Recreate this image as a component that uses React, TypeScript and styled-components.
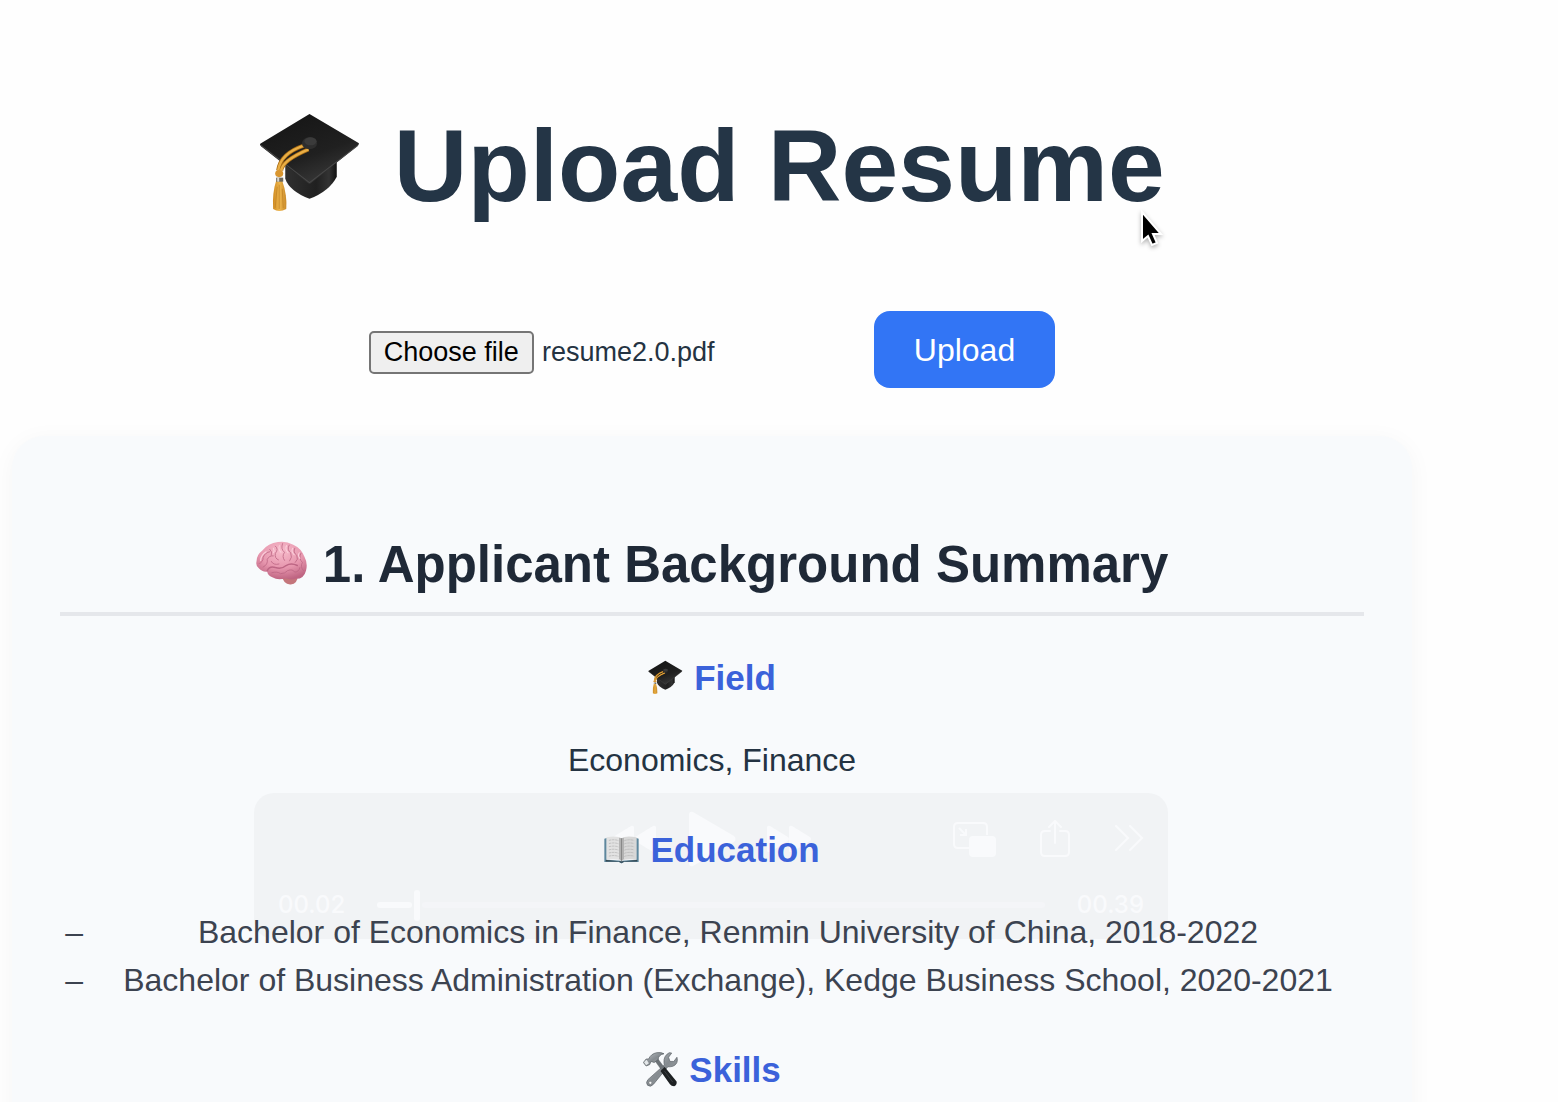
import React, { useId, useState } from "react";
import styled, { createGlobalStyle } from "styled-components";

const GlobalStyle = createGlobalStyle`
  *, *::before, *::after { box-sizing: border-box; }
  body {
    margin: 0;
    background: #fefefe;
    color: #243342;
    font-family: "Liberation Sans", Helvetica, Arial, sans-serif;
    font-size: 32px;
    line-height: 48px;
  }
`;

const Page = styled.main`
  position: relative;
  height: 100vh;
  overflow-y: auto;
  scrollbar-width: none;
  padding: 110px 146px 48px 12px;
  text-align: center;
`;

const Title = styled.h1`
  margin: 0 0 89px;
  font-size: 102px;
  line-height: 112px;
  color: #243546;
`;

const Pointer = styled.svg`
  position: absolute;
  left: 1138px;
  top: 208px;
  width: 28px;
  height: 42px;
  pointer-events: none;
  filter: drop-shadow(0 2px 2px rgba(0, 0, 0, 0.3));
`;

const UploadForm = styled.form`
  display: flex;
  justify-content: center;
  align-items: center;
  gap: 32px;
  margin-bottom: 48px;
`;

const FileField = styled.div`
  display: flex;
  align-items: center;
  gap: 8px;
  width: 473px;
  padding-top: 6px;
  font-size: 27px;
  line-height: 39px;
`;

const HiddenFileInput = styled.input`
  position: absolute;
  width: 1px;
  height: 1px;
  opacity: 0;
`;

const ChooseButton = styled.label`
  padding: 0 13px;
  border: 2px solid #757575;
  border-radius: 5px;
  background: #efefef;
  color: #000;
  white-space: nowrap;
`;

const UploadButton = styled.button`
  padding: 15px 40px 14px;
  border: 0;
  border-radius: 16px;
  background: #3275f5;
  color: #fff;
  font: inherit;
`;

const Card = styled.section`
  position: relative;
  padding: 90px 48px 48px;
  border-radius: 32px;
  background: #f8fafc;
  box-shadow: 0 4px 24px rgba(0, 0, 0, 0.04);
`;

const CardContent = styled.div`
  position: relative;
  z-index: 1;
`;

const SectionTitle = styled.h2`
  margin: 0 0 35px;
  padding-bottom: 9px;
  border-bottom: 4px solid #e5e7eb;
  font-size: 51px;
  line-height: 77px;
  color: #1f2937;
`;

const Topic = styled.h3`
  margin: 35px 0 32px;
  font-size: 35px;
  line-height: 53px;
  color: #3b62da;
`;

const Paragraph = styled.p`
  margin: 0 0 39px;
`;

const List = styled.ul`
  margin: 0 0 39px;
  padding-left: 32px;
  list-style-type: "– ";
  color: #3c4350;
`;

const EmojiSvg = styled.svg`
  width: 1em;
  height: 1em;
  margin-right: 0.04em;
  vertical-align: -0.13em;
`;

const Player = styled.div`
  position: absolute;
  top: 357px;
  left: 242px;
  right: 244px;
  height: 146px;
  padding: 18px 24px;
  border-radius: 20px;
  background: #f1f3f5;
  color: #f9fafc;
`;

const PlayerRow = styled.div`
  display: grid;
  grid-template-columns: 1fr auto 1fr;
  align-items: center;
  height: 56px;
`;

const Transport = styled.div`
  grid-column: 2;
  display: flex;
  align-items: center;
  gap: 30px;
`;

const Extras = styled.div`
  display: flex;
  justify-content: flex-end;
  align-items: center;
  gap: 44px;
`;

const Timeline = styled.div`
  display: flex;
  align-items: center;
  gap: 32px;
  margin-top: 20px;
  font-family: Inter, sans-serif;
  font-size: 24px;
  font-weight: 500;
  line-height: 36px;
`;

const Track = styled.div`
  flex: 1;
  display: flex;
  align-items: center;
  gap: 2px;
`;

const Played = styled.span`
  width: 35px;
  height: 6px;
  border-radius: 3px;
  background: #f9fafc;
`;

const Knob = styled.span`
  width: 6px;
  height: 31px;
  border-radius: 3px;
  background: #f9fafc;
`;

const Remaining = styled.span`
  flex: 1;
  height: 6px;
  border-radius: 3px;
  background: #f4f5f8;
`;

function CapEmoji() {
  const id = useId();
  const top = `${id}top`;
  const base = `${id}base`;
  const gold = `${id}gold`;
  return (
    <EmojiSvg viewBox="0 0 101 101" aria-hidden="true">
      <defs>
        <linearGradient id={top} x1="0.2" y1="0" x2="0.7" y2="1">
          <stop offset="0" stopColor="#151515" />
          <stop offset="0.6" stopColor="#202020" />
          <stop offset="1" stopColor="#3a3a3a" />
        </linearGradient>
        <linearGradient id={base} x1="0" y1="0" x2="1" y2="0">
          <stop offset="0" stopColor="#303030" />
          <stop offset="0.6" stopColor="#202020" />
          <stop offset="0.85" stopColor="#333" />
          <stop offset="1" stopColor="#111" />
        </linearGradient>
        <linearGradient id={gold} x1="0" y1="0" x2="1" y2="0">
          <stop offset="0" stopColor="#d08b20" />
          <stop offset="0.5" stopColor="#edb54c" />
          <stop offset="1" stopColor="#c98a2a" />
        </linearGradient>
      </defs>
      <path d="M26 50V66Q30 78 50 86Q70 78 77 64V46Z" fill={`url(#${base})`} />
      <path d="M50 2L99 31Q99 33 97 34L52 70Q50 72 48 70L2 34Q0 32 2 31Z" fill={`url(#${top})`} />
      <path d="M2 33L50 70L98 33" fill="none" stroke="#484848" strokeWidth="1" />
      <path d="M45 33Q21 41 19 58M49 37Q23 48 22 58" fill="none" stroke="#a96c14" strokeWidth="4" />
      <path d="M45 33Q21 41 19 58M49 37Q23 48 22 58" fill="none" stroke="#e9ae45" strokeWidth="2.5" />
      <ellipse cx="50" cy="31" rx="7.5" ry="6" fill="#2e2e2e" />
      <ellipse cx="51" cy="29" rx="6" ry="4" fill="#3b3b3b" />
      <ellipse cx="20" cy="61" rx="4" ry="3.5" fill="#d99630" />
      <path d="M17 68H23Q28 82 27 96Q20 100 14 96Q13 80 17 68Z" fill={`url(#${gold})`} />
      <path d="M18 74L16 95M20 72V96M23 76L24 95" stroke="#c28425" strokeWidth="0.8" />
      <rect x="17" y="65" width="7" height="4" fill="#6d685b" />
      <rect x="18" y="65" width="2" height="4" fill="#d9d5ca" />
    </EmojiSvg>
  );
}

function BrainEmoji() {
  const id = useId();
  return (
    <EmojiSvg viewBox="0 0 100 100" aria-hidden="true">
      <defs>
        <radialGradient id={id} cx="0.5" cy="0.25" r="0.75">
          <stop offset="0" stopColor="#f7bccb" />
          <stop offset="0.6" stopColor="#e695ad" />
          <stop offset="1" stopColor="#bf6582" />
        </radialGradient>
      </defs>
      <path d="M50 72Q54 92 68 91Q82 90 82 72Z" fill="#c4757b" />
      <path
        d="M1 46Q1 33 12 25Q24 10 43 8Q58 5 73 13Q89 20 95 37Q102 50 98 64Q94 80 79 80Q68 83 58 79Q43 84 32 77Q23 73 22 66Q12 67 6 60Q-1 55 1 46Z"
        fill={`url(#${id})`}
      />
      <g fill="none" stroke="#bd6684" strokeWidth="1.6" strokeLinecap="round">
        <path d="M22 64Q27 54 38 58Q50 62 59 54Q69 48 81 54" strokeWidth="3" />
        <path d="M6 50Q14 48 14 38Q18 28 27 27M14 57Q24 52 22 42Q26 34 34 35" />
        <path d="M27 22Q33 27 30 34M38 16Q45 22 38 30Q36 40 44 43M52 11Q48 22 56 28Q50 36 56 44" />
        <path d="M65 14Q60 23 68 29Q72 38 66 45M76 20Q72 28 80 34Q84 42 77 48M88 30Q83 40 91 48Q86 56 93 64" />
        <path d="M31 68Q42 65 48 70Q57 70 62 64Q72 60 76 67Q85 66 86 58M30 46Q34 54 45 51" />
      </g>
      <g fill="none" stroke="#fbd0dc" strokeWidth="2" strokeLinecap="round">
        <path d="M20 27Q10 33 9 44M34 20Q37 25 34 29M46 15Q43 22 49 28M60 15Q56 21 63 29M72 20Q68 26 75 33M85 29Q81 34 86 40" />
      </g>
    </EmojiSvg>
  );
}

function BookEmoji() {
  return (
    <EmojiSvg viewBox="0 0 100 100" aria-hidden="true">
      <path d="M1 19L8 17V79L50 82L92 79V17L99 19V86H57L50 90L43 86H1Z" fill="#5e879d" />
      <path d="M5 80L50 84L95 80V84H58Q50 92 42 84H5Z" fill="#33434c" />
      <path d="M7 15Q38 9 50 18V82Q34 74 7 79Z" fill="#e2e2e2" />
      <path d="M93 15Q62 9 50 18V82Q66 74 93 79Z" fill="#d8d8d8" />
      <path d="M50 18Q45 16 43 17V77L50 82L57 77V17Q54 16 50 18Z" fill="#b2b2b2" />
      <path d="M50 18V84" stroke="#777" strokeWidth="2" />
      <g fill="none" stroke="#b0b0b0" strokeWidth="2" strokeDasharray="7 2">
        <path d="M14 24Q30 20 42 25M14 33Q30 29 42 34M14 42Q30 38 42 43M14 51Q30 47 42 52M14 60Q30 56 42 61M14 69Q30 65 42 70" />
        <path d="M58 25Q70 20 86 24M58 34Q70 29 86 33M58 43Q70 38 86 42M58 52Q70 47 86 51M58 61Q70 56 86 60M58 70Q70 65 86 69" />
      </g>
    </EmojiSvg>
  );
}

function ToolsEmoji() {
  const id = useId();
  return (
    <EmojiSvg viewBox="0 0 100 100" aria-hidden="true">
      <defs>
        <linearGradient id={id} x1="0" y1="0" x2="1" y2="1">
          <stop offset="0" stopColor="#c3c8cc" />
          <stop offset="0.5" stopColor="#858b90" />
          <stop offset="1" stopColor="#a2a7aa" />
        </linearGradient>
      </defs>
      <path
        d="M60 31Q58 11 75 2L82 3L73 15L77 27L88 27L97 15Q102 34 85 41Q76 43 71 42L30 92Q22 102 13 95Q7 87 14 79L61 37Z"
        fill={`url(#${id})`}
        stroke="#5d6368"
        strokeWidth="2"
      />
      <circle cx="21" cy="88" r="4" fill="#f8fafc" stroke="#666" />
      <path d="M34 25L43 20L62 46L54 53Z" fill="#6c7277" stroke="#484e53" />
      <path d="M50 54L62 43L96 84Q98 93 89 98Q81 98 77 92Z" fill="#1e2123" />
      <path d="M61 54L85 86" stroke="#45494c" strokeWidth="2" />
      <path
        d="M1 30L9 20L16 20Q23 5 39 2Q52 0 60 5Q44 8 43 22L32 30L23 27L19 36L9 40Z"
        fill={`url(#${id})`}
        stroke="#565d62"
        strokeWidth="2"
      />
      <path d="M3 29L10 22L17 32L9 38Z" fill="#e3e7e9" />
    </EmojiSvg>
  );
}

function VideoControls() {
  return (
    <Player aria-hidden="true">
      <PlayerRow>
        <Transport>
          <svg width="46" height="28" viewBox="0 0 46 28" fill="currentColor">
            <path d="M23 2V26Q22 28 20 27L2 16Q0 14 2 12L20 1Q22 0 23 2ZM45 2V26Q44 28 42 27L24 16Q22 14 24 12L42 1Q44 0 45 2Z" />
          </svg>
          <svg width="49" height="56" viewBox="0 0 49 56" fill="currentColor">
            <path d="M2 4Q2 0 6 1L47 25Q50 28 47 31L6 55Q2 56 2 52Z" />
          </svg>
          <svg width="46" height="28" viewBox="0 0 46 28" fill="currentColor">
            <path d="M1 2V26Q2 28 4 27L22 16Q24 14 22 12L4 1Q2 0 1 2ZM23 2V26Q24 28 26 27L44 16Q46 14 44 12L26 1Q24 0 23 2Z" />
          </svg>
        </Transport>
        <Extras>
          <svg width="43" height="36" viewBox="0 0 43 36" fill="none" stroke="currentColor" strokeWidth="2">
            <path d="M16 27H5Q1 27 1 23V6Q1 2 5 2H30Q34 2 34 6V14M6 7L13 14M13 8V14H7" />
            <rect x="17" y="16" width="25" height="19" rx="3" fill="currentColor" />
          </svg>
          <svg width="30" height="38" viewBox="0 0 30 38" fill="none" stroke="currentColor" strokeWidth="2" strokeLinecap="round">
            <path d="M10 11H5Q1 11 1 15V32Q1 36 5 36H25Q29 36 29 32V15Q29 11 25 11H20M15 23V1M9 7L15 1L21 7" />
          </svg>
          <svg width="30" height="28" viewBox="0 0 30 28" fill="none" stroke="currentColor" strokeWidth="2" strokeLinecap="round">
            <path d="M2 1L14 13L2 25M16 1L28 13L16 25" />
          </svg>
        </Extras>
      </PlayerRow>
      <Timeline>
        <span>00.02</span>
        <Track>
          <Played />
          <Knob />
          <Remaining />
        </Track>
        <span>00.39</span>
      </Timeline>
    </Player>
  );
}

export default function App() {
  const [fileName, setFileName] = useState("resume2.0.pdf");

  return (
    <>
      <GlobalStyle />
      <Page>
        <Title>
          <CapEmoji /> Upload Resume
        </Title>
        <UploadForm onSubmit={(event) => event.preventDefault()}>
          <FileField>
            <HiddenFileInput
              id="resume"
              type="file"
              onChange={(event) => setFileName(event.target.files?.[0]?.name ?? fileName)}
            />
            <ChooseButton htmlFor="resume">Choose file</ChooseButton>
            <span>{fileName}</span>
          </FileField>
          <UploadButton type="submit">Upload</UploadButton>
        </UploadForm>
        <Card>
          <VideoControls />
          <CardContent>
            <SectionTitle>
              <BrainEmoji /> 1. Applicant Background Summary
            </SectionTitle>
            <Topic>
              <CapEmoji /> Field
            </Topic>
            <Paragraph>Economics, Finance</Paragraph>
            <Topic>
              <BookEmoji /> Education
            </Topic>
            <List>
              <li>Bachelor of Economics in Finance, Renmin University of China, 2018-2022</li>
              <li>Bachelor of Business Administration (Exchange), Kedge Business School, 2020-2021</li>
            </List>
            <Topic>
              <ToolsEmoji /> Skills
            </Topic>
          </CardContent>
        </Card>
        <Pointer viewBox="0 0 28 42" aria-hidden="true">
          <path
            d="M4 4V33L10 28L14 37L19 35L15 26H23Z"
            fill="#000"
            stroke="#fff"
            strokeWidth="2"
          />
        </Pointer>
      </Page>
    </>
  );
}
